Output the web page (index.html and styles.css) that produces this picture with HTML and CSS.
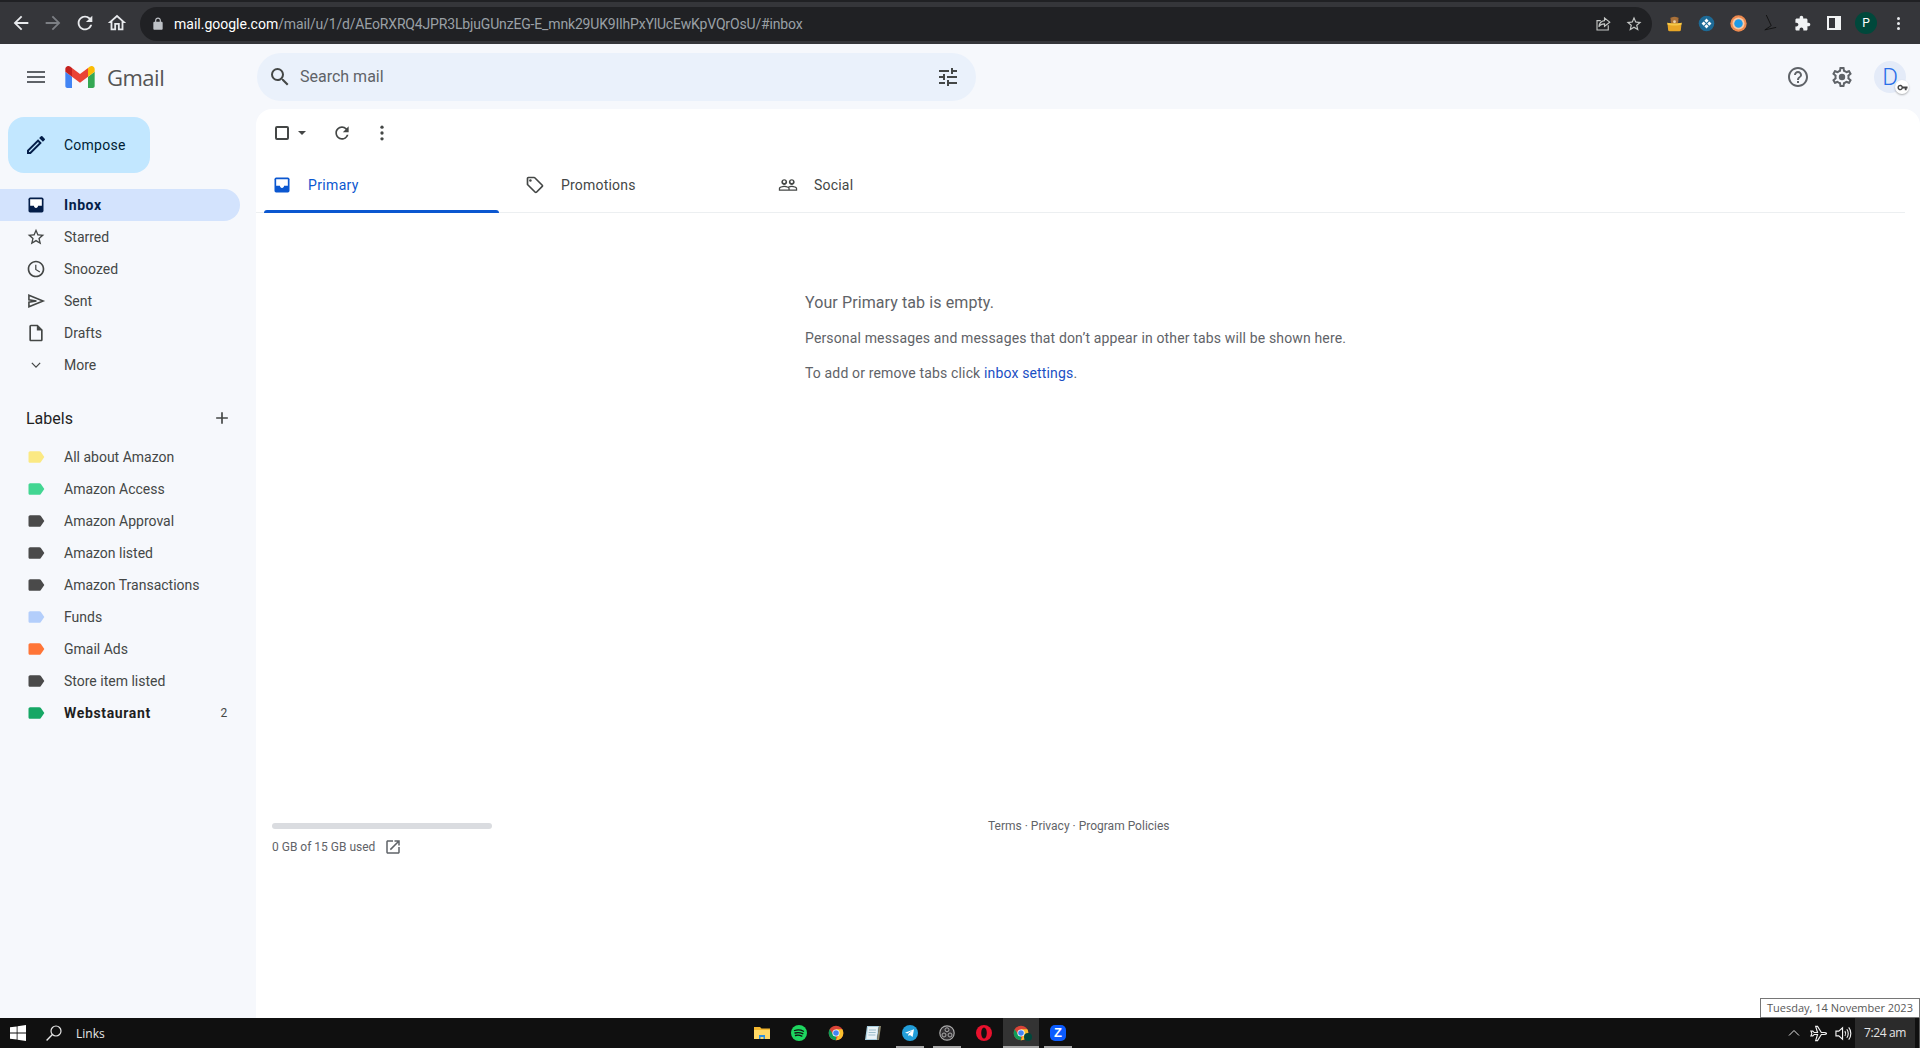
FILE: index.html
```html
<!DOCTYPE html>
<html lang="en">
<head>
    <meta charset="UTF-8">
    <title>Inbox - Gmail</title>
    <link rel="stylesheet" href="styles.css">
</head>
<body>

<svg class="defs" width="0" height="0">
    <symbol id="i-label" viewBox="0 0 24 24"><path d="M17.63 5.84C17.27 5.33 16.67 5 16 5L5 5.01C3.9 5.01 3 5.9 3 7v10c0 1.1.9 1.99 2 1.99L16 19c.67 0 1.27-.33 1.63-.84L22 12l-4.37-6.16z"/></symbol>
    <symbol id="i-inbox" viewBox="0 0 24 24">
        <path d="M19 3H5a2 2 0 0 0-2 2v14a2 2 0 0 0 2 2h14a2 2 0 0 0 2-2V5a2 2 0 0 0-2-2z"/>
        <path fill="#fff" d="M5 5h14v8h-4.500c0 1.500-1.100 2.500-2.500 2.500S9.500 14.500 9.500 13H5z"/>
    </symbol>
    <symbol id="i-chrome" viewBox="0 0 24 24">
        <circle cx="12" cy="12" r="11" fill="#db4437"/>
        <path fill="#0f9d58" d="M12 23a11 11 0 0 1-9.5-16.5L8 15l4 2z"/>
        <path fill="#fbc02d" d="M12 23a11 11 0 0 0 9.5-16.5H12l3.5 8z"/>
        <circle cx="12" cy="12" r="5.4" fill="#fff"/>
        <circle cx="12" cy="12" r="4.2" fill="#4285f4"/>
    </symbol>
</svg>

<div class="browser-bar">
    <div class="nav-btn"><svg viewBox="0 0 24 24"><path d="M20 11H7.83l5.59-5.59L12 4l-8 8 8 8 1.41-1.41L7.83 13H20v-2z"/></svg></div>
    <div class="nav-btn dim"><svg viewBox="0 0 24 24"><path d="M12 4l-1.41 1.41L16.17 11H4v2h12.17l-5.58 5.59L12 20l8-8z"/></svg></div>
    <div class="nav-btn"><svg viewBox="0 0 24 24"><path d="M17.65 6.35A7.958 7.958 0 0 0 12 4c-4.42 0-7.99 3.58-7.99 8s3.57 8 7.99 8c3.73 0 6.84-2.55 7.73-6h-2.08A5.99 5.99 0 0 1 12 18c-3.31 0-6-2.69-6-6s2.69-6 6-6c1.66 0 3.14.69 4.22 1.78L13 11h7V4l-2.35 2.35z"/></svg></div>
    <div class="nav-btn"><svg viewBox="0 0 24 24"><path d="M12 5.69l5 4.5V18h-2v-6H9v6H7v-7.81l5-4.5M12 3L2 12h3v8h6v-6h2v6h6v-8h3L12 3z"/></svg></div>

    <div class="omnibox">
        <svg class="lock" viewBox="0 0 24 24"><path d="M18 8h-1V6c0-2.76-2.24-5-5-5S7 3.24 7 6v2H6c-1.1 0-2 .9-2 2v10c0 1.1.9 2 2 2h12c1.1 0 2-.9 2-2V10c0-1.1-.9-2-2-2zM9 6c0-1.66 1.34-3 3-3s3 1.34 3 3v2H9V6z"/></svg>
        <span class="url"><span class="url-host">mail.google.com</span><span class="url-path">/mail/u/1/d/AEoRXRQ4JPR3LbjuGUnzEG-E_mnk29UK9IlhPxYlUcEwKpVQrOsU/#inbox</span></span>
        <svg class="omni-icon share" viewBox="0 0 24 24"><path fill="none" stroke="#c4c7c5" stroke-width="1.5" d="M19 13.5V20H4V7.5h5M14 4l7 5.5-7 5.5v-3.2c-3.6 0-6 1.2-7.5 4 .4-4.500 3-7.800 7.500-8.300z"/></svg>
        <svg class="omni-icon star" viewBox="0 0 24 24"><path d="M22 9.24l-7.19-.62L12 2 9.19 8.63 2 9.24l5.46 4.73L5.82 21 12 17.27 18.18 21l-1.63-7.03L22 9.24zM12 15.4l-3.76 2.27 1-4.28-3.32-2.88 4.38-.38L12 6.1l1.71 4.04 4.38.38-3.32 2.88 1 4.28L12 15.4z"/></svg>
    </div>

    <div class="ext-list">
        <div class="ext"><svg viewBox="0 0 24 24">
            <circle cx="8" cy="5" r="2" fill="#8a5a2b"/><circle cx="16" cy="5" r="2" fill="#8a5a2b"/>
            <circle cx="12" cy="8" r="5.500" fill="#a9713a"/><circle cx="12" cy="9.500" r="2" fill="#e8cfa8"/>
            <path fill="#e9a727" d="M2 11c3 1.500 17 1.500 20 0l-1 10c-.2 1.500-1.500 2-3 2H6c-1.500 0-2.800-.5-3-2z"/>
            <path fill="#f7c948" d="M2 11c3 1.500 17 1.500 20 0v2.500c-4 1.800-16 1.800-20 0z"/>
        </svg></div>
        <div class="ext"><svg viewBox="0 0 24 24">
            <circle cx="12" cy="12" r="11" fill="#1d6a96"/>
            <path fill="#fff" d="M12 5l3 3-3 3-3-3zM12 13l3 3-3 3-3-3zM5 12l3-3 3 3-3 3zM13 12l3-3 3 3-3 3z"/>
        </svg></div>
        <div class="ext"><svg viewBox="0 0 24 24">
            <circle cx="12" cy="12" r="11.500" fill="#ee8a4f"/><circle cx="12" cy="12" r="8.500" fill="#f8c9a6"/><circle cx="12" cy="12" r="6" fill="#1e9be8"/>
        </svg></div>
        <div class="ext"><svg viewBox="0 0 24 24"><path fill="none" stroke="#111" stroke-width="1.300" d="M6 0l7 15-9 6 16-3.500"/></svg></div>
        <div class="ext"><svg class="light" viewBox="0 0 24 24"><path d="M20.500 11H19V7c0-1.100-.9-2-2-2h-4V3.500C13 2.120 11.880 1 10.500 1S8 2.120 8 3.500V5H4c-1.100 0-1.990.9-1.990 2v3.800H3.500c1.490 0 2.700 1.210 2.700 2.700s-1.210 2.700-2.700 2.700H2V20c0 1.100.9 2 2 2h3.800v-1.500c0-1.490 1.210-2.700 2.700-2.700 1.490 0 2.700 1.210 2.700 2.700V22H17c1.100 0 2-.9 2-2v-4h1.500c1.380 0 2.500-1.120 2.500-2.500S21.880 11 20.500 11z"/></svg></div>
        <div class="ext"><div class="side-panel"></div></div>
        <div class="ext"><div class="profile">P</div></div>
        <div class="ext"><div class="chrome-dots"><i></i><i></i><i></i></div></div>
    </div>
</div>

<div class="app">
    <header class="app-header">
        <div class="brand">
            <svg class="menu-icon" viewBox="0 0 24 24"><path d="M3 18h18v-2H3v2zm0-5h18v-2H3v2zm0-7v2h18V6H3z"/></svg>
            <svg class="logo" viewBox="52 42 88 66">
                <path fill="#4285f4" d="M58 108h14V74L52 59v43c0 3.320 2.690 6 6 6"/>
                <path fill="#34a853" d="M120 108h14c3.320 0 6-2.690 6-6V59l-20 15"/>
                <path fill="#fbbc04" d="M120 48v26l20-15v-8c0-7.420-8.470-11.650-14.400-7.200"/>
                <path fill="#ea4335" d="M72 74V48l24 18 24-18v26L96 92"/>
                <path fill="#c5221f" d="M52 51v8l20 15V48l-5.600-4.200c-5.940-4.450-14.400-.22-14.400 7.200"/>
            </svg>
            <span class="logo-text">Gmail</span>
        </div>
        <div class="search">
            <svg viewBox="0 0 24 24"><path d="M15.500 14h-.79l-.28-.27A6.471 6.471 0 0 0 16 9.500 6.500 6.500 0 1 0 9.500 16c1.610 0 3.090-.59 4.230-1.570l.27.28v.79l5 4.990L20.490 19l-4.990-5zm-6 0C7.010 14 5 11.990 5 9.500S7.010 5 9.500 5 14 7.010 14 9.500 11.990 14 9.500 14z"/></svg>
            <span class="search-text">Search mail</span>
            <svg class="tune" viewBox="0 0 24 24"><path d="M3 17v2h6v-2H3zM3 5v2h10V5H3zm10 16v-2h8v-2h-8v-2h-2v6h2zM7 9v2H3v2h4v2h2V9H7zm14 4v-2H11v2h10zm-6-4h2V7h4V5h-4V3h-2v6z"/></svg>
        </div>
        <div class="header-right">
            <svg viewBox="0 0 24 24"><path d="M11 18h2v-2h-2v2zm1-16C6.480 2 2 6.480 2 12s4.480 10 10 10 10-4.480 10-10S17.520 2 12 2zm0 18c-4.410 0-8-3.590-8-8s3.590-8 8-8 8 3.590 8 8-3.590 8-8 8zm0-14c-2.210 0-4 1.790-4 4h2c0-1.100.9-2 2-2s2 .9 2 2c0 2-3 1.750-3 5h2c0-2.250 3-2.500 3-5 0-2.210-1.790-4-4-4z"/></svg>
            <svg viewBox="0 0 24 24"><path d="M19.430 12.980c.04-.32.07-.64.07-.98 0-.34-.03-.66-.07-.98l2.110-1.650c.19-.15.24-.42.12-.64l-2-3.460c-.09-.16-.26-.25-.44-.25-.06 0-.12.01-.17.03l-2.490 1c-.52-.4-1.080-.73-1.690-.98l-.38-2.650C14.460 2.180 14.250 2 14 2h-4c-.25 0-.46.18-.49.42l-.38 2.650c-.61.25-1.170.59-1.690.98l-2.490-1c-.06-.02-.12-.03-.18-.03-.17 0-.34.09-.43.25l-2 3.460c-.13.22-.07.49.12.64l2.110 1.650c-.04.32-.07.65-.07.98 0 .33.03.66.07.98l-2.110 1.650c-.19.15-.24.42-.12.64l2 3.460c.09.16.26.25.44.25.06 0 .12-.01.17-.03l2.490-1c.52.4 1.080.73 1.690.98l.38 2.650c.03.24.24.42.49.42h4c.25 0 .46-.18.49-.42l.38-2.650c.61-.25 1.170-.59 1.690-.98l2.490 1c.06.02.12.03.18.03.17 0 .34-.09.43-.25l2-3.460c.12-.22.07-.49-.12-.64l-2.110-1.650zm-1.980-1.710c.04.31.05.52.05.73 0 .21-.02.43-.05.73l-.14 1.130.89.7 1.080.84-.7 1.210-1.270-.51-1.040-.42-.9.68c-.43.32-.84.56-1.250.73l-1.060.43-.16 1.130-.2 1.350h-1.400l-.19-1.350-.16-1.130-1.060-.43c-.43-.18-.83-.41-1.230-.71l-.91-.7-1.060.43-1.270.51-.7-1.210 1.080-.84.89-.7-.14-1.130c-.03-.31-.05-.54-.05-.74s.02-.43.05-.73l.14-1.130-.89-.7-1.080-.84.7-1.210 1.270.51 1.040.42.9-.68c.43-.32.84-.56 1.250-.73l1.060-.43.16-1.130.2-1.350h1.390l.19 1.350.16 1.130 1.060.43c.43.18.83.41 1.230.71l.91.7 1.060-.43 1.270-.51.7 1.210-1.070.85-.89.7.14 1.130z"/><circle cx="12" cy="12" r="3.200"/></svg>
            <div class="account">
                <span class="account-letter">D</span>
                <span class="account-key"><svg viewBox="0 0 24 24"><path d="M12.650 10A6 6 0 1 0 12.650 14H17v4h4v-4h2v-4H12.650zM7 15a3 3 0 1 1 0-6 3 3 0 0 1 0 6z"/></svg></span>
            </div>
        </div>
    </header>

    <div class="app-body">
        <aside class="sidebar">
            <div class="compose">
                <svg viewBox="0 0 24 24"><path d="M3 17.250V21h3.750L17.810 9.940l-3.750-3.750L3 17.250zM5.920 19H5v-.92l9.060-9.060.92.92L5.920 19zM20.710 5.630l-2.340-2.340a1 1 0 0 0-1.410 0l-1.830 1.830 3.750 3.750 1.830-1.830a1 1 0 0 0 0-1.410z"/></svg>
                <span>Compose</span>
            </div>

            <nav class="nav">
                <div class="nav-row active"><svg viewBox="0 0 24 24"><use href="#i-inbox"/></svg><span>Inbox</span></div>
                <div class="nav-row"><svg viewBox="0 0 24 24"><path d="M22 9.240l-7.190-.62L12 2 9.190 8.630 2 9.240l5.460 4.730L5.820 21 12 17.270 18.180 21l-1.630-7.030L22 9.240zM12 15.400l-3.760 2.270 1-4.280-3.320-2.880 4.380-.38L12 6.100l1.710 4.040 4.380.38-3.320 2.880 1 4.280L12 15.400z"/></svg><span>Starred</span></div>
                <div class="nav-row"><svg viewBox="0 0 24 24"><path d="M11.990 2C6.470 2 2 6.480 2 12s4.470 10 9.990 10C17.520 22 22 17.520 22 12S17.520 2 11.990 2zM12 20c-4.420 0-8-3.580-8-8s3.580-8 8-8 8 3.580 8 8-3.580 8-8 8zm.5-13H11v6l5.250 3.150.75-1.230-4.500-2.670z"/></svg><span>Snoozed</span></div>
                <div class="nav-row"><svg viewBox="0 0 24 24"><path fill="none" stroke="#444746" stroke-width="1.900" d="M3.500 5l17 7-17 7v-5.500l9-1.500-9-1.500z"/></svg><span>Sent</span></div>
                <div class="nav-row"><svg viewBox="0 0 24 24"><path d="M14 2H6c-1.100 0-2 .9-2 2v16c0 1.100.9 2 2 2h12c1.100 0 2-.9 2-2V8l-6-6zM6 20V4h7v5h5v11H6z"/></svg><span>Drafts</span></div>
                <div class="nav-row"><svg viewBox="0 0 24 24"><path fill="none" stroke="#444746" stroke-width="1.500" d="M7 9.500l5 5 5-5"/></svg><span>More</span></div>
            </nav>

            <div class="labels-head">
                <span>Labels</span>
                <svg viewBox="0 0 24 24"><path d="M19 13h-6v6h-2v-6H5v-2h6V5h2v6h6v2z"/></svg>
            </div>

            <div class="labels">
                <div class="nav-row"><svg class="lb-yellow"><use href="#i-label"/></svg><span>All about Amazon</span></div>
                <div class="nav-row"><svg class="lb-mint"><use href="#i-label"/></svg><span>Amazon Access</span></div>
                <div class="nav-row"><svg class="lb-dark"><use href="#i-label"/></svg><span>Amazon Approval</span></div>
                <div class="nav-row"><svg class="lb-dark"><use href="#i-label"/></svg><span>Amazon listed</span></div>
                <div class="nav-row"><svg class="lb-dark"><use href="#i-label"/></svg><span>Amazon Transactions</span></div>
                <div class="nav-row"><svg class="lb-blue"><use href="#i-label"/></svg><span>Funds</span></div>
                <div class="nav-row"><svg class="lb-orange"><use href="#i-label"/></svg><span>Gmail Ads</span></div>
                <div class="nav-row"><svg class="lb-dark"><use href="#i-label"/></svg><span>Store item listed</span></div>
                <div class="nav-row unread"><svg class="lb-green"><use href="#i-label"/></svg><span>Webstaurant</span><span class="count">2</span></div>
            </div>
        </aside>

        <main class="mail">
            <div class="toolbar">
                <span class="checkbox"></span>
                <span class="caret"></span>
                <svg class="refresh" viewBox="0 0 24 24"><path d="M17.650 6.350A7.958 7.958 0 0 0 12 4c-4.420 0-7.990 3.580-7.990 8s3.570 8 7.990 8c3.730 0 6.840-2.550 7.730-6h-2.080A5.990 5.990 0 0 1 12 18c-3.310 0-6-2.690-6-6s2.690-6 6-6c1.660 0 3.140.69 4.220 1.780L13 11h7V4l-2.350 2.350z"/></svg>
                <svg class="more" viewBox="0 0 24 24"><circle cx="12" cy="5" r="2"/><circle cx="12" cy="12" r="2"/><circle cx="12" cy="19" r="2"/></svg>
            </div>

            <div class="tabs">
                <div class="tab selected"><svg viewBox="0 0 24 24"><use href="#i-inbox"/></svg><span>Primary</span></div>
                <div class="tab"><svg viewBox="0 0 24 24"><path d="M21.410 11.580l-9-9C12.050 2.220 11.550 2 11 2H4c-1.100 0-2 .9-2 2v7c0 .55.22 1.050.59 1.420l9 9c.36.36.86.58 1.410.58s1.050-.22 1.410-.59l7-7c.37-.36.59-.86.59-1.410s-.23-1.060-.59-1.420zM13 20.010L4 11V4h7v-.01l9 9-7 7.020z"/><circle cx="6.500" cy="6.500" r="1.500"/></svg><span>Promotions</span></div>
                <div class="tab"><svg viewBox="0 0 24 24"><path d="M16.500 13c-1.200 0-3.070.34-4.500 1-1.430-.67-3.300-1-4.500-1C5.330 13 1 14.080 1 16.250V19h22v-2.750c0-2.170-4.330-3.250-6.500-3.250zm-4 4.500h-10v-1.250c0-.54 2.560-1.750 5-1.750s5 1.210 5 1.750v1.250zm9 0H14v-1.250c0-.46-.2-.86-.52-1.220.88-.3 1.960-.53 3.020-.53 2.440 0 5 1.210 5 1.750v1.250zM7.500 12c1.930 0 3.500-1.570 3.500-3.500S9.430 5 7.500 5 4 6.570 4 8.500 5.570 12 7.500 12zm0-5.500c.83 0 1.500.67 1.500 1.500s-.67 1.500-1.500 1.500S6 8.830 6 8s.67-1.500 1.500-1.500zm9 5.500c1.930 0 3.500-1.570 3.500-3.500S18.430 5 16.500 5 13 6.570 13 8.500s1.570 3.500 3.500 3.500zm0-5.500c.83 0 1.500.67 1.500 1.500s-.67 1.500-1.500 1.500S15 8.830 15 8s.67-1.500 1.500-1.500z"/></svg><span>Social</span></div>
            </div>

            <div class="empty">
                <h2>Your Primary tab is empty.</h2>
                <p>Personal messages and messages that don’t appear in other tabs will be shown here.</p>
                <p>To add or remove tabs click <a href="#">inbox settings</a>.</p>
            </div>

            <footer class="mail-footer">
                <div class="storage">
                    <div class="storage-bar"></div>
                    <div class="storage-text">
                        <span>0 GB of 15 GB used</span>
                        <svg viewBox="0 0 24 24"><path d="M19 19H5V5h7V3H5c-1.110 0-2 .9-2 2v14c0 1.100.89 2 2 2h14c1.100 0 2-.9 2-2v-7h-2v7zM14 3v2h3.590l-9.830 9.830 1.410 1.410L19 6.410V10h2V3h-7z"/></svg>
                    </div>
                </div>
                <div class="terms">Terms · Privacy · Program Policies</div>
            </footer>
        </main>
    </div>
</div>

<div class="taskbar">
    <div class="task-left">
        <svg class="win-logo" viewBox="0 0 16 16"><path fill="#fff" d="M0 2.300l6.700-.9v6.200H0zM7.500 1.300L16 0v7.600H7.500zM0 8.400h6.700v6.200L0 13.700zM7.500 8.400H16V16l-8.500-1.300z"/></svg>
        <svg class="task-search" viewBox="0 0 16 16"><circle cx="10" cy="6" r="5" fill="none" stroke="#e6e6e6" stroke-width="1.200"/><path stroke="#e6e6e6" stroke-width="1.400" d="M6.400 9.600L.6 15.400"/></svg>
        <span class="task-links">Links</span>
    </div>

    <div class="task-apps">
        <div class="task-app"><svg viewBox="0 0 16 16"><path fill="#f5b82e" d="M0 2h6l1.500 1.500H16V14H0z"/><path fill="#ffd966" d="M0 5h16v9H0z"/><path fill="#2f8fdc" d="M5 10h6v4H9.500v-2h-3v2H5z"/></svg></div>
        <div class="task-app"><svg viewBox="0 0 16 16"><circle cx="8" cy="8" r="8" fill="#1ed760"/><path fill="none" stroke="#111" stroke-width="1.300" stroke-linecap="round" d="M3.500 5.500c3-.9 6.500-.6 9 .8M4 8c2.500-.7 5.500-.4 7.800.7M4.500 10.500c2-.5 4.500-.3 6.300.6"/></svg></div>
        <div class="task-app"><svg><use href="#i-chrome"/></svg></div>
        <div class="task-app"><svg viewBox="0 0 16 16"><path fill="#a9cfe0" d="M2 1h12l-2 14H0z"/><path fill="#eaf3f6" d="M3 2h10L11.500 14H1.500z"/><path fill="#8e8a70" d="M14 1h2l-2 14h-2z"/><path stroke="#7aa7ba" stroke-width=".7" d="M4 5h7M3.700 7.500h7M3.400 10h7"/></svg></div>
        <div class="task-app running"><svg viewBox="0 0 16 16"><circle cx="8" cy="8" r="8" fill="#229ed9"/><path fill="#fff" d="M3 7.800l9-3.600-1.400 7.800-2.700-2-1.400 1.300-.2-2.300 4-3.500-5 3.100z"/></svg></div>
        <div class="task-app running"><svg viewBox="0 0 16 16"><circle cx="8" cy="8" r="7.200" fill="#302e31" stroke="#aaa" stroke-width="1.200"/><circle cx="8" cy="4.800" r="2" fill="none" stroke="#aaa"/><circle cx="5" cy="10" r="2" fill="none" stroke="#aaa"/><circle cx="11" cy="10" r="2" fill="none" stroke="#aaa"/></svg></div>
        <div class="task-app"><svg viewBox="0 0 16 16"><circle cx="8" cy="8" r="8" fill="#e8112d"/><ellipse cx="8" cy="8" rx="2.800" ry="5.600" fill="#111"/></svg></div>
        <div class="task-app running current">
            <svg><use href="#i-chrome"/></svg>
            <span class="chrome-badge"></span>
        </div>
        <div class="task-app running"><div class="zoom-tile">Z</div></div>
    </div>

    <div class="tray">
        <svg class="tray-chevron" viewBox="0 0 12 8"><path fill="none" stroke="#e6e6e6" d="M1 6.500l5-5 5 5"/></svg>
        <svg class="tray-plane" viewBox="0 0 18 18"><path fill="none" stroke="#f2f2f2" stroke-width="1.200" d="M1 6.500h2L4.500 8H8L6 1.500h2L12 8h3c1.300 0 2.500.4 2.500 1S16.300 10 15 10h-3l-4 6.500H6L8 10H4.500L3 11.500H1L2 9z"/></svg>
        <svg class="tray-sound" viewBox="0 0 18 18"><path fill="none" stroke="#f2f2f2" stroke-width="1.200" d="M1 6.500h3L8 3v12l-4-3.500H1zM10.500 6.500c1 1.500 1 3.500 0 5M12.500 4.500c2 2.500 2 6.500 0 9M14.500 2.500c3 3.500 3 9.500 0 13"/></svg>
        <div class="tray-clock">7:24 am</div>
        <div class="show-desktop"></div>
    </div>

    <div class="date-tip">Tuesday, 14 November 2023</div>
</div>

</body>
</html>
```

FILE: styles.css
```css
* {
    box-sizing: border-box;
}

html, body {
    margin: 0;
    padding: 0;
    height: 100%;
}

body {
    display: flex;
    flex-direction: column;
    height: 1048px;
    overflow: hidden;
    font-family: Roboto, "Liberation Sans", sans-serif;
    font-size: 14px;
    color: #444746;
    background-color: #fff;
}

svg {
    display: block;
    flex-shrink: 0;
}

.defs {
    position: absolute;
}

/* browser chrome */
.browser-bar {
    display: flex;
    align-items: center;
    height: 44px;
    padding-left: 5px;
    background-color: #35363a;
    border-top: 2px solid #202124;
}

.nav-btn {
    display: flex;
    justify-content: center;
    width: 32px;
}

.nav-btn svg {
    width: 22px;
    height: 22px;
    fill: #e8eaed;
}

.nav-btn.dim svg {
    fill: #7c7f84;
}

.omnibox {
    display: flex;
    align-items: center;
    width: 1512px;
    height: 34px;
    margin-left: 7px;
    margin-top: 1px;
    padding-left: 11px;
    background-color: #202124;
    border-radius: 17px;
}

.lock {
    width: 14px;
    height: 14px;
    fill: #bdc1c6;
}

.url {
    margin-left: 9px;
    font-size: 14px;
    white-space: nowrap;
}

.url-host {
    color: #fff;
}

.url-path {
    color: #9aa0a6;
    letter-spacing: -0.16px;
}

.omni-icon {
    width: 18px;
    height: 18px;
    fill: #c4c7c5;
}

.share {
    margin-left: auto;
}

.star {
    margin-left: 13px;
    margin-right: 9px;
}

.ext-list {
    display: flex;
    margin-left: 6px;
}

.ext {
    display: flex;
    justify-content: center;
    align-items: center;
    width: 32px;
    height: 32px;
}

.ext svg {
    width: 17px;
    height: 17px;
}

.ext svg.light {
    fill: #f1f3f4;
}

.side-panel {
    width: 14px;
    height: 14px;
    border: 2px solid #f1f3f4;
    border-right-width: 6px;
    background-color: #35363a;
}

.profile {
    width: 22px;
    height: 22px;
    border-radius: 50%;
    background-color: #00483b;
    color: #fff;
    font-size: 12px;
    line-height: 22px;
    text-align: center;
}

.chrome-dots {
    display: flex;
    flex-direction: column;
    gap: 2px;
}

.chrome-dots i {
    width: 3px;
    height: 3px;
    border-radius: 50%;
    background-color: #e8eaed;
}

/* gmail shell */
.app {
    flex: 1;
    display: flex;
    flex-direction: column;
    min-height: 0;
    background-color: #f6f8fc;
}

.app-header {
    display: flex;
    align-items: center;
    height: 65px;
    padding-top: 1px;
}

.brand {
    display: flex;
    align-items: center;
    width: 257px;
    padding-left: 24px;
}

.menu-icon {
    width: 24px;
    height: 24px;
    fill: #5f6368;
}

.logo {
    width: 30px;
    height: 22px;
    margin-left: 17px;
}

.logo-text {
    margin-left: 12px;
    font-family: "Open Sans", sans-serif;
    font-size: 22px;
    letter-spacing: -0.5px;
    color: #555;
}

.search {
    display: flex;
    align-items: center;
    width: 719px;
    height: 48px;
    padding: 0 16px 0 11px;
    background-color: #eaf1fb;
    border-radius: 24px;
}

.search svg {
    width: 24px;
    height: 24px;
    fill: #444746;
}

.search-text {
    margin-left: 8px;
    margin-bottom: 2px;
    font-size: 16px;
    color: #5f6368;
}

.search .tune {
    margin-left: auto;
}

.header-right {
    display: flex;
    align-items: center;
    gap: 20px;
    margin-left: auto;
    padding-right: 14px;
}

.header-right > svg {
    width: 24px;
    height: 24px;
    fill: #5f6368;
}

.account {
    position: relative;
    width: 32px;
    height: 32px;
    border-radius: 50%;
    background-color: #e4ebf8;
    color: #2a6fe8;
    font-size: 24px;
    font-weight: 300;
    line-height: 32px;
    text-align: center;
}

.account-key {
    position: absolute;
    right: -3px;
    bottom: -1px;
    display: flex;
    justify-content: center;
    align-items: center;
    width: 14px;
    height: 14px;
    border-radius: 50%;
    background-color: #fff;
    box-shadow: 0 1px 2px rgba(0, 0, 0, 0.3);
}

.account-key svg {
    width: 11px;
    height: 11px;
    fill: #444;
}

.app-body {
    flex: 1;
    display: flex;
    min-height: 0;
}

/* sidebar */
.sidebar {
    width: 256px;
    padding-top: 8px;
}

.compose {
    display: flex;
    align-items: center;
    width: 142px;
    height: 56px;
    margin-left: 8px;
    margin-bottom: 16px;
    padding-left: 16px;
    background-color: #c2e7ff;
    border-radius: 16px;
    color: #001d35;
    letter-spacing: 0.25px;
}

.compose svg {
    width: 24px;
    height: 24px;
    fill: #041e49;
    margin-right: 16px;
}

.nav-row {
    display: flex;
    align-items: center;
    width: 240px;
    height: 32px;
    padding: 0 12px 0 26px;
    border-radius: 0 16px 16px 0;
}

.nav-row svg {
    width: 20px;
    height: 20px;
    margin-right: 18px;
    fill: #444746;
}

.nav-row.active {
    background-color: #d3e3fd;
    color: #041e49;
    font-weight: 700;
    letter-spacing: 0.6px;
}

.nav-row.active svg {
    fill: #041e49;
}

.labels-head {
    display: flex;
    justify-content: space-between;
    align-items: center;
    width: 240px;
    height: 32px;
    margin-top: 21px;
    margin-bottom: 7px;
    padding: 0 8px 0 26px;
    font-size: 16px;
    color: #1f1f1f;
}

.labels-head svg {
    width: 20px;
    height: 20px;
    fill: #444746;
}

.nav-row svg.lb-yellow { fill: #fbe983; }
.nav-row svg.lb-mint { fill: #42d692; }
.nav-row svg.lb-dark { fill: #4a4a4a; }
.nav-row svg.lb-blue { fill: #b3cefb; }
.nav-row svg.lb-orange { fill: #ff7537; }
.nav-row svg.lb-green { fill: #16a765; }

.unread {
    font-weight: 700;
    color: #1f1f1f;
    letter-spacing: 0.65px;
}

.count {
    margin-left: auto;
    font-size: 12px;
    font-weight: 400;
    color: #444746;
}

/* mail pane */
.mail {
    flex: 1;
    display: flex;
    flex-direction: column;
    background-color: #fff;
    border-radius: 16px 16px 0 0;
}

.toolbar {
    display: flex;
    align-items: center;
    height: 48px;
    padding-left: 19px;
}

.checkbox {
    width: 14px;
    height: 14px;
    border: 2px solid #444746;
    border-radius: 2px;
}

.caret {
    width: 0;
    height: 0;
    margin-left: 9px;
    border-left: 4px solid transparent;
    border-right: 4px solid transparent;
    border-top: 4px solid #444746;
}

.refresh,
.more {
    width: 20px;
    height: 20px;
    fill: #444746;
}

.refresh {
    margin-left: 26px;
}

.more {
    margin-left: 20px;
}

.tabs {
    display: flex;
    height: 56px;
    margin-right: 15px;
    padding-left: 8px;
    border-bottom: 1px solid #eceff1;
}

.tab {
    position: relative;
    display: flex;
    align-items: center;
    gap: 16px;
    width: 235px;
    height: 56px;
    margin-right: 18px;
    padding-left: 8px;
    letter-spacing: 0.2px;
}

.tab svg {
    width: 20px;
    height: 20px;
    fill: #444746;
}

.tab.selected {
    color: #0b57d0;
    letter-spacing: 0.35px;
}

.tab.selected svg {
    fill: #0b57d0;
}

.tab.selected::after {
    content: "";
    position: absolute;
    left: 0;
    right: 0;
    bottom: 0;
    height: 3px;
    background-color: #0b57d0;
    border-radius: 3px 3px 0 0;
}

.empty {
    margin-left: 549px;
    padding-top: 80px;
    color: #5f6368;
    line-height: 20px;
}

.empty h2 {
    margin: 0 0 15px;
    font-size: 16px;
    font-weight: 400;
    letter-spacing: 0.1px;
}

.empty p {
    margin: 0 0 15px;
    letter-spacing: 0.15px;
}

.empty a {
    color: #1a4fc4;
    text-decoration: none;
}

.mail-footer {
    display: flex;
    margin-top: 421px;
    padding-left: 16px;
    font-size: 12px;
    color: #5f6368;
}

.storage {
    width: 220px;
    padding-top: 4px;
}

.storage-bar {
    height: 6px;
    background-color: #dadce0;
    border-radius: 3px;
}

.storage-text {
    display: flex;
    align-items: center;
    gap: 9px;
    margin-top: 9px;
}

.storage-text svg {
    width: 18px;
    height: 18px;
    fill: #5f6368;
}

.terms {
    margin-left: 496px;
    line-height: 14px;
}

/* windows taskbar */
.taskbar {
    position: relative;
    display: flex;
    align-items: center;
    height: 30px;
    background-color: #101010;
    color: #e6e6e6;
    font-family: "Open Sans", sans-serif;
    font-size: 12px;
}

.task-left {
    display: flex;
    align-items: center;
    width: 744px;
    padding-left: 10px;
}

.win-logo {
    width: 16px;
    height: 16px;
}

.task-search {
    width: 16px;
    height: 16px;
    margin-left: 20px;
}

.task-links {
    margin-left: 14px;
}

.task-apps {
    display: flex;
    gap: 1px;
    height: 30px;
}

.task-app {
    position: relative;
    display: flex;
    justify-content: center;
    align-items: center;
    width: 36px;
    height: 30px;
}

.task-app svg {
    width: 16px;
    height: 16px;
}

.task-app.running::after {
    content: "";
    position: absolute;
    left: 4px;
    right: 4px;
    bottom: 0;
    height: 2px;
    background-color: #a6a6a6;
}

.task-app.current {
    background-color: #333;
}

.task-app.current::after {
    left: 0;
    right: 0;
}

.chrome-badge {
    position: absolute;
    left: 21px;
    top: 15px;
    width: 8px;
    height: 8px;
    border-radius: 50%;
    background-color: #00483b;
}

.zoom-tile {
    width: 16px;
    height: 16px;
    border-radius: 5px;
    background-color: #0b5cff;
    color: #fff;
    font-family: "Liberation Sans", sans-serif;
    font-size: 13px;
    font-weight: 700;
    line-height: 16px;
    text-align: center;
}

.tray {
    display: flex;
    align-items: center;
    height: 30px;
    margin-left: auto;
}

.tray-chevron {
    width: 12px;
    height: 8px;
}

.tray-plane {
    width: 17px;
    height: 17px;
    margin-left: 10px;
}

.tray-sound {
    width: 17px;
    height: 17px;
    margin-left: 8px;
}

.tray-clock {
    width: 60px;
    height: 30px;
    margin-left: 3px;
    background-color: #2b2b2b;
    letter-spacing: -0.4px;
    line-height: 30px;
    text-align: center;
}

.show-desktop {
    width: 5px;
    height: 30px;
    border-right: 1px solid #555;
}

.date-tip {
    position: absolute;
    right: 0;
    bottom: 30px;
    width: 160px;
    height: 20px;
    background-color: #fff;
    border: 1px solid #767676;
    color: #575757;
    font-size: 11px;
    line-height: 18px;
    text-align: center;
}
```
